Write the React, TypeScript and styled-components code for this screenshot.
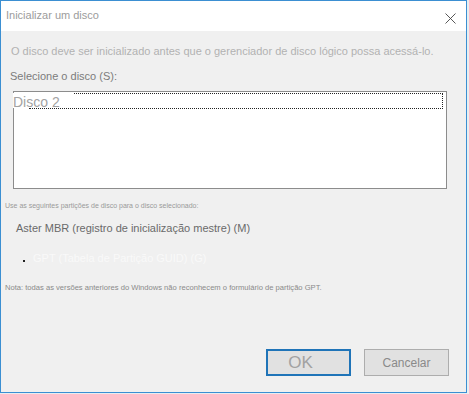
import React from "react";
import styled, { createGlobalStyle } from "styled-components";

const Global = createGlobalStyle`
  html, body { margin: 0; padding: 0; }
  body {
    background: #e9edf0;
    font-family: "Liberation Sans", Arial, sans-serif;
    width: 469px;
    height: 394px;
    overflow: hidden;
  }
`;

const Dialog = styled.div`
  box-sizing: border-box;
  width: 467px;
  height: 393px;
  border: 1px solid #3b8fd2;
  background: #f0f0f0;
  display: flex;
  flex-direction: column;
`;

const TitleBar = styled.div`
  box-sizing: border-box;
  height: 30px;
  background: #ffffff;
  display: flex;
  justify-content: space-between;
  align-items: flex-start;
  padding: 8px 10px 0 5px;
`;

const Title = styled.span`
  font-size: 11px;
  line-height: 13px;
  color: #9c9c9c;
`;

const CloseBtn = styled.span`
  display: block;
  width: 11px;
  height: 11px;
  margin-top: 1px;
`;

const Body = styled.div`
  flex: 1;
  display: flex;
  flex-direction: column;
`;

const Text = styled.div<{ $size?: number; $color: string; $top: number; $left: number }>`
  font-size: ${(p) => p.$size ?? 11}px;
  line-height: ${(p) => Math.round((p.$size ?? 11) * 1.2)}px;
  color: ${(p) => p.$color};
  margin-top: ${(p) => p.$top}px;
  margin-left: ${(p) => p.$left}px;
  white-space: nowrap;
`;

const ListBox = styled.div`
  box-sizing: border-box;
  margin: 8px 0 0 12px;
  width: 434px;
  height: 98px;
  border: 1px solid #8c8c8c;
  background: #ffffff;
  padding-top: 1px;
`;

const ListItem = styled.div`
  position: relative;
  display: flex;
  align-items: flex-start;
  height: 16px;
  margin-left: -1px;
  &::after {
    content: "";
    position: absolute;
    left: 16px;
    right: 3px;
    top: 0;
    bottom: 0;
    border-top: 1px dotted #222;
    border-right: 1px dotted #222;
    border-bottom: 1px dotted #222;
  }
`;

const ItemLabel = styled.span`
  position: relative;
  z-index: 1;
  display: block;
  box-sizing: border-box;
  background: #ffffff;
  font-size: 14px;
  line-height: 15px;
  height: 15px;
  padding-top: 2px;
  color: #a3a3a3;
  padding-right: 13px;
`;

const RadioRow = styled.div`
  display: flex;
  align-items: center;
  margin: 17px 0 0 22px;
  height: 13px;
`;

const Dot = styled.span`
  width: 2px;
  height: 2px;
  background: #222;
  margin-top: 4px;
`;

const FaintLabel = styled.span`
  font-size: 11px;
  line-height: 13px;
  color: #f9f9f9;
  margin-left: 8px;
`;

const Footer = styled.div`
  margin-top: auto;
  display: flex;
  justify-content: flex-end;
  gap: 13px;
  padding: 0 17px 16px 0;
`;

const Button = styled.button<{ $primary?: boolean }>`
  box-sizing: border-box;
  width: 85px;
  height: 27px;
  background: #e1e1e1;
  border: ${(p) => (p.$primary ? "2px solid #1f74b8" : "1px solid #adadad")};
  font-family: "Liberation Sans", Arial, sans-serif;
  font-size: ${(p) => (p.$primary ? 17 : 12)}px;
  color: ${(p) => (p.$primary ? "#a2a2a2" : "#8a8a8a")};
  padding: 0;
  ${(p) => (p.$primary ? "padding-right: 16px;" : "")}
`;

export default function App() {
  return (
    <>
      <Global />
      <Dialog>
        <TitleBar>
          <Title>Inicializar um disco</Title>
          <CloseBtn>
            <svg width="11" height="11" viewBox="0 0 11 11">
              <path d="M0.5 0.5 L10.5 10.5 M10.5 0.5 L0.5 10.5" stroke="#444" strokeWidth="0.9" fill="none" />
            </svg>
          </CloseBtn>
        </TitleBar>
        <Body>
          <Text $color="#b2b2b2" $top={14} $left={10}>
            O disco deve ser inicializado antes que o gerenciador de disco lógico possa acessá-lo.
          </Text>
          <Text $color="#7c7c7c" $top={12} $left={9}>
            Selecione o disco (S):
          </Text>
          <ListBox>
            <ListItem>
              <ItemLabel>Disco 2</ItemLabel>
            </ListItem>
          </ListBox>
          <Text $size={7} $color="#9a9a9a" $top={13} $left={4}>
            Use as seguintes partições de disco para o disco selecionado:
          </Text>
          <Text $color="#6a6a6a" $top={12} $left={15}>
            Aster MBR (registro de inicialização mestre) (M)
          </Text>
          <RadioRow>
            <Dot />
            <FaintLabel>GPT (Tabela de Partição GUID) (G)</FaintLabel>
          </RadioRow>
          <Text $size={7.6} $color="#8a8a8a" $top={18} $left={4}>
            Nota: todas as versões anteriores do Windows não reconhecem o formulário de partição GPT.
          </Text>
          <Footer>
            <Button $primary>OK</Button>
            <Button>Cancelar</Button>
          </Footer>
        </Body>
      </Dialog>
    </>
  );
}
